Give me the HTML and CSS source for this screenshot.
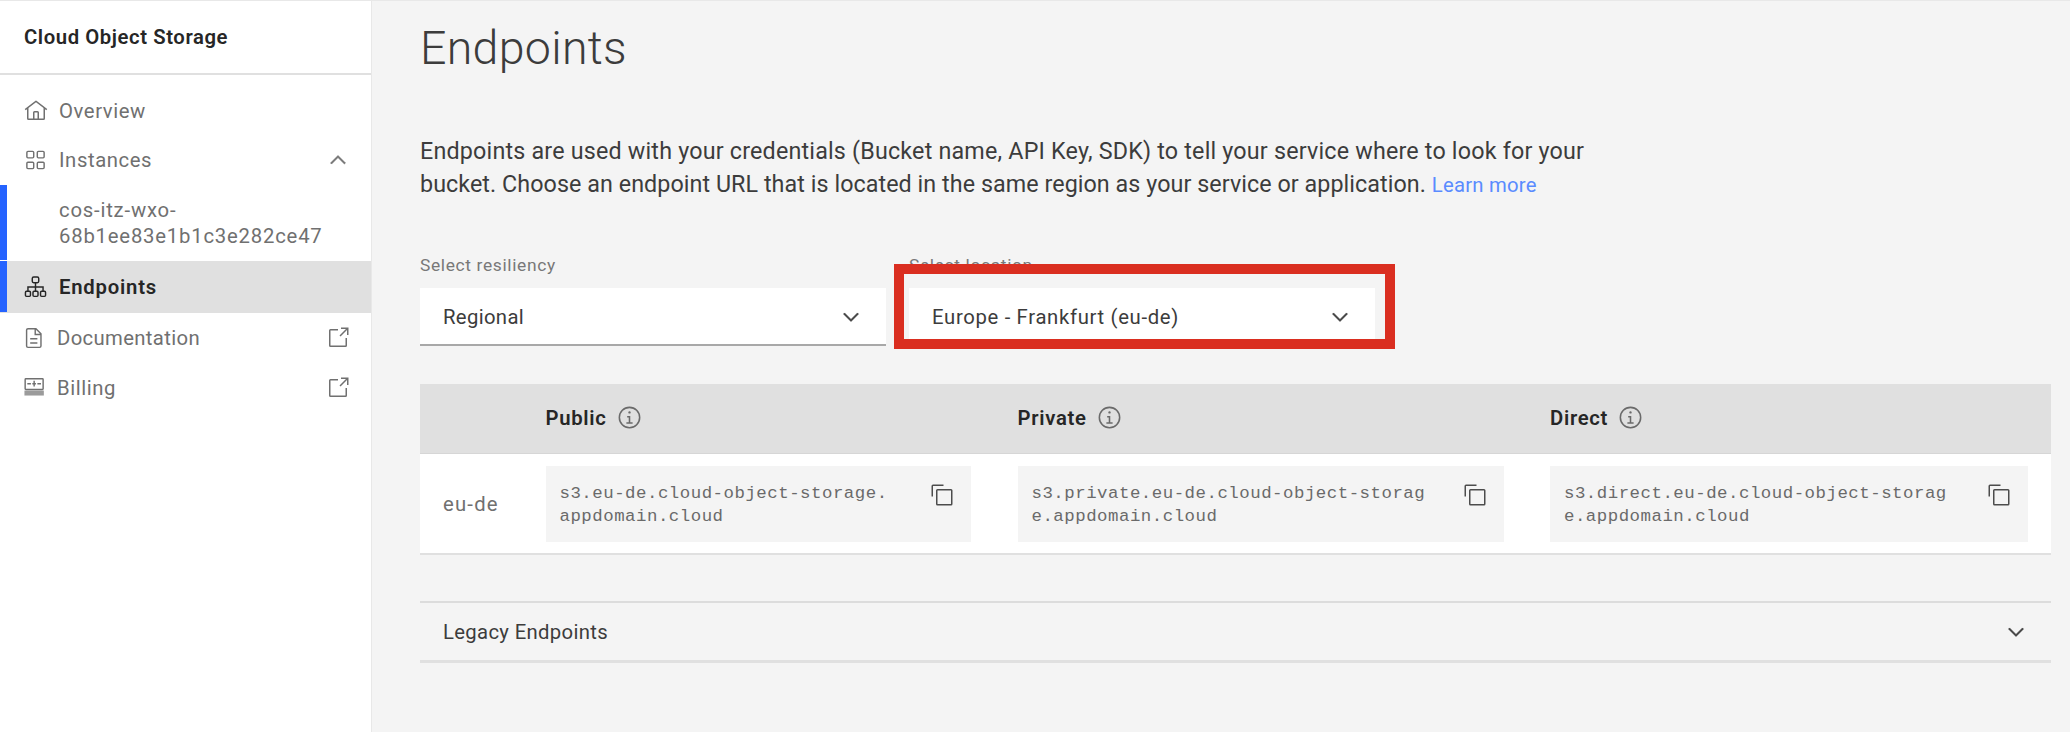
FILE: index.html
```html
<!DOCTYPE html>
<html lang="en">
<head>
<meta charset="utf-8">
<title>Endpoints - Cloud Object Storage</title>
<link rel="stylesheet" href="styles.css">
</head>
<body>
<svg class="sprite" aria-hidden="true">
  <symbol id="launch" viewBox="0 0 32 32"><path d="M26 28H6a2 2 0 0 1-2-2V6A2 2 0 0 1 6 4H16V6H6V26H26V16h2V26A2 2 0 0 1 26 28Z"/><path d="M20 2V4H26.586L18 12.586 19.414 14 28 5.414V12H30V2Z"/></symbol>
  <symbol id="chevron" viewBox="0 0 16 16"><path d="M8 11 3 6 3.7 5.3 8 9.6 12.3 5.3 13 6Z"/></symbol>
  <symbol id="info" viewBox="0 0 32 32"><path d="M17 22V14H13v2h2v6H12v2h8V22Z"/><circle cx="16" cy="9.5" r="1.5"/><path d="M16 30A14 14 0 1 1 30 16 14 14 0 0 1 16 30ZM16 4A12 12 0 1 0 28 16 12 12 0 0 0 16 4Z"/></symbol>
  <symbol id="copy" viewBox="0 0 32 32"><path d="M28 10V28H10V10H28m0-2H10a2 2 0 0 0-2 2V28a2 2 0 0 0 2 2H28a2 2 0 0 0 2-2V10a2 2 0 0 0-2-2Z"/><path d="M4 18H2V4A2 2 0 0 1 4 2H18V4H4Z"/></symbol>
</svg>
<div class="app">
  <aside class="sidebar">
    <div class="product">Cloud Object Storage</div>
    <nav class="nav">
      <a class="item">
        <svg class="icon" viewBox="0 0 32 32"><path d="M16.61 2.21a1 1 0 0 0-1.24 0L1 13.42l1.24 1.57L4 13.62V26a2 2 0 0 0 2 2H26a2 2 0 0 0 2-2V13.63L29.76 15 31 13.43ZM18 26H14V18h4Zm2 0V18a2 2 0 0 0-2-2H14a2 2 0 0 0-2 2v8H6V12.06l10-7.79 10 7.8V26Z"/></svg>
        <span>Overview</span>
      </a>
      <a class="item">
        <svg class="icon line" viewBox="0 0 32 32"><rect x="4" y="4" width="9.5" height="9" rx="1.5"/><rect x="18.500" y="4" width="9.5" height="9" rx="1.5"/><rect x="4" y="19" width="9.5" height="9" rx="1.5"/><rect x="18.500" y="19" width="9.5" height="9" rx="1.5"/></svg>
        <span>Instances</span>
        <svg class="icon chevron up end"><use href="#chevron"/></svg>
      </a>
      <a class="item child">cos-itz-wxo-<br>68b1ee83e1b1c3e282ce47</a>
      <a class="item active">
        <svg class="icon line" viewBox="0 0 32 32"><rect x="11.5" y="2" width="9" height="8" rx="2"/><path d="M16 10V22M5.5 22V16H26.5V22"/><rect x="2" y="22" width="7" height="7" rx="1.5"/><rect x="12.5" y="22" width="7" height="7" rx="1.5"/><rect x="23" y="22" width="7" height="7" rx="1.5"/></svg>
        <span>Endpoints</span>
      </a>
      <a class="item external">
        <svg class="icon line" viewBox="0 0 32 32"><path d="M18 3H7a2 2 0 0 0-2 2V27a2 2 0 0 0 2 2H23a2 2 0 0 0 2-2V10ZM17 3V11H25M10 17H20M10 23H20"/></svg>
        <span>Documentation</span>
        <svg class="icon end"><use href="#launch"/></svg>
      </a>
      <a class="item external">
        <svg class="icon line" viewBox="0 0 32 32"><rect x="3" y="3" width="25" height="15" rx="1"/><path d="M6 10H11M13 10H18M20 10H25M15.500 6V14"/><path class="stack" d="M2 23H29"/></svg>
        <span class="billing">Billing</span>
        <svg class="icon end"><use href="#launch"/></svg>
      </a>
    </nav>
  </aside>
  <main class="main">
    <h1 class="title">Endpoints</h1>
    <p class="intro"><span class="intro-first">Endpoints are used with your credentials (Bucket name, API Key, SDK) to tell your service where to look for your</span><br><span>bucket. Choose an endpoint URL that is located in the same region as your service or application.</span> <a class="more">Learn more</a></p>
    <div class="filters">
      <div class="field">
        <label>Select resiliency</label>
        <div class="select"><span class="value-short">Regional</span><svg class="icon chevron"><use href="#chevron"/></svg></div>
      </div>
      <div class="field">
        <label>Select location</label>
        <div class="select"><span>Europe - Frankfurt (eu-de)</span><svg class="icon chevron"><use href="#chevron"/></svg></div>
        <div class="highlight"></div>
      </div>
    </div>
    <section class="table">
      <div class="row head">
        <span></span>
        <span class="th"><span>Public</span><svg class="icon"><use href="#info"/></svg></span>
        <span class="th"><span>Private</span><svg class="icon"><use href="#info"/></svg></span>
        <span class="th"><span>Direct</span><svg class="icon"><use href="#info"/></svg></span>
      </div>
      <div class="row body">
        <span class="region">eu-de</span>
        <div class="snippet"><code>s3.eu-de.cloud-object-storage.<br>appdomain.cloud</code><svg class="icon"><use href="#copy"/></svg></div>
        <div class="snippet"><code>s3.private.eu-de.cloud-object-storag<br>e.appdomain.cloud</code><svg class="icon"><use href="#copy"/></svg></div>
        <div class="snippet"><code>s3.direct.eu-de.cloud-object-storag<br>e.appdomain.cloud</code><svg class="icon"><use href="#copy"/></svg></div>
      </div>
    </section>
    <div class="accordion"><span>Legacy Endpoints</span><svg class="icon chevron"><use href="#chevron"/></svg></div>
  </main>
</div>
</body>
</html>
```
FILE: styles.css
```css
* { box-sizing: border-box; }
body { margin: 0; background: #f4f4f4; color: #3c3c3c; font-family: Roboto, "Liberation Sans", sans-serif; font-size: 20.3px; }
.sprite { display: none; }
.app { display: flex; height: 732px; border-top: 1px solid #e8e8e8; overflow: hidden; }
.icon { width: 24px; height: 24px; flex: none; fill: currentColor; }
.line { width: 23px; fill: none; stroke: currentColor; stroke-width: 2; }
.chevron { stroke: currentColor; stroke-width: 0.4; }

.sidebar { width: 372px; background: #fff; border-right: 1px solid #e8e8e8; color: #707070; }
.product { height: 74px; padding-left: 24px; border-bottom: 2px solid #e0e0e0; line-height: 73px; font-weight: 600; letter-spacing: 0.58px; color: #262626; }
.nav { padding-top: 12px; }
.item { display: flex; align-items: center; height: 49px; padding: 0 21px 1px 24px; gap: 11px; letter-spacing: 0.58px; }
.item .line { margin-right: 1px; }
.end { margin-left: auto; }
.up { transform: rotate(180deg); }
.item.child { display: block; height: 76px; padding: 12px 0 0 59px; line-height: 26px; letter-spacing: 0.8px; position: relative; }
.child::before, .active::before { content: ""; position: absolute; left: 0; top: 0; bottom: 1px; width: 7px; background: #2563ff; }
.item.active { position: relative; height: 52px; background: #e0e0e0; letter-spacing: 0.78px; color: #262626; font-weight: 600; }
.item.external { height: 50px; padding-left: 23px; gap: 10px; letter-spacing: 0.35px; }
.item .billing { letter-spacing: 0.58px; }
.stack { stroke-width: 7; opacity: 0.7; }

.main { flex: 1; padding: 17px 19px 0 48px; }
.title { margin: 0; font-size: 46.5px; line-height: 60px; font-weight: 300; letter-spacing: 0.3px; }
.intro { height: 66px; margin: 57px 0 0; font-size: 23.3px; line-height: 33px; letter-spacing: 0.06px; white-space: nowrap; }
.intro-first { letter-spacing: 0.19px; }
.more { font-size: 20.3px; letter-spacing: 0.24px; color: #5a8bff; }
.filters { display: flex; gap: 23px; margin-top: 53px; }
.field { width: 466px; position: relative; }
.field label { display: block; height: 34px; line-height: 22px; font-size: 17.4px; letter-spacing: 0.64px; color: #787878; }
.select { display: flex; align-items: center; justify-content: space-between; height: 58px; padding: 1px 23px 0; letter-spacing: 0.67px; background: #fff; border-bottom: 2px solid #a8a8a8; }
.value-short { letter-spacing: 0.34px; }
.highlight { position: absolute; left: -15px; top: 10px; width: 501px; height: 85px; border: 10px solid #da2e20; }

.table { margin-top: 38px; background: #fff; border-bottom: 2px solid #e0e0e0; }
.row { display: grid; grid-template-columns: 125.5px 472px 532.5px 501px; align-items: center; }
.head { height: 70px; padding-bottom: 2px; background: #e0e0e0; border-bottom: 1px solid #d6d6d6; font-weight: 600; letter-spacing: 0.7px; color: #262626; }
.th { display: flex; align-items: center; gap: 10px; }
.th .icon { width: 25px; height: 25px; color: #6a6a6a; }
.body { height: 99px; }
.region { padding-left: 23px; letter-spacing: 1.2px; color: #707070; }
.snippet { display: flex; justify-content: space-between; width: 425.5px; height: 76px; padding: 16px 17px 0 14px; background: #f4f4f4; }
.snippet:nth-child(3) { width: 486px; }
.snippet:nth-child(4) { width: 477.5px; }
.snippet code { font: 17.4px/23.3px "Liberation Mono", monospace; letter-spacing: 0.5px; color: #6a6a6a; }
.snippet .icon { margin: 1px 0 0; color: #4c4c4c; }

.accordion { display: flex; align-items: center; justify-content: space-between; height: 62px; margin-top: 46px; padding: 0 23px; letter-spacing: 0.33px; border-top: 2px solid #dcdcdc; border-bottom: 3px solid #e0e0e0; }
```
